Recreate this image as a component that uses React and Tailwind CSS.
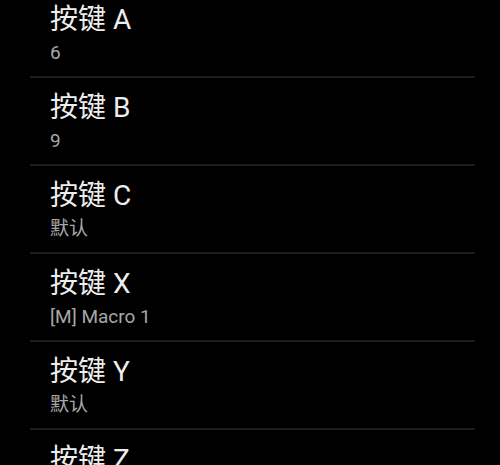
import React from "react";

const keys = [
  { name: "按键 A", value: "6" },
  { name: "按键 B", value: "9" },
  { name: "按键 C", value: "默认" },
  { name: "按键 X", value: "[M] Macro 1" },
  { name: "按键 Y", value: "默认" },
  { name: "按键 Z", value: "默认" },
];

const KeyRow = ({ name, value, last }) => (
  <div>
    <div className="h-[86px] pl-[50px] pt-[14px]">
      <div className="text-[28px] leading-[32px] text-[#ededed]">{name}</div>
      <div className="text-[19px] leading-[24px] mt-[5px] text-[#a8a8a8]">{value}</div>
    </div>
    {!last && <div className="h-[2px] ml-[30px] mr-[25px] bg-[#1c1c1c]" />}
  </div>
);

export default function App() {
  return (
    <div
      className="w-[500px] h-[465px] overflow-hidden bg-black"
      style={{ fontFamily: "Roboto, 'Noto Sans CJK SC', sans-serif" }}>
      <div className="-mt-[10px]">
        {keys.map((k, i) => (
          <KeyRow key={k.name} {...k} last={i === keys.length - 1} />
        ))}
      </div>
    </div>
  );
}
